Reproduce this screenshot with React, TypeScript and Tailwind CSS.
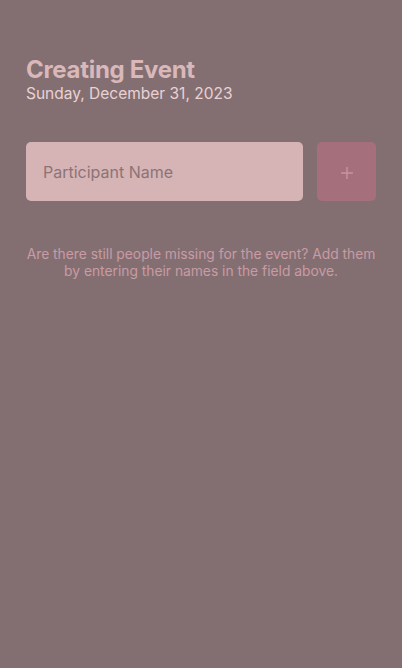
import React from "react";

export default function App() {
  return (
    <div
      className="w-[402px] h-[668px] bg-[#836f72] overflow-hidden"
      style={{ fontFamily: "Inter, 'Noto Sans', sans-serif" }}
    >
      <div className="px-[26px] pt-[56px]">
        <h1 className="text-[24px] leading-[28px] font-bold text-[#dab8ba] tracking-[-0.3px]">
          Creating Event
        </h1>
        <p className="text-[15.5px] leading-[20px] text-[#ead2d3]">
          Sunday, December 31, 2023
        </p>
        <div className="flex gap-[14px] mt-[38px]">
          <div className="flex-1 h-[59px] rounded-[5px] bg-[#d6b4b5] flex items-center px-[17px]">
            <span className="text-[16px] text-[#8c7376]">Participant Name</span>
          </div>
          <div className="w-[59px] h-[59px] rounded-[5px] bg-[#a5707b] flex items-center justify-center">
            <svg width="12" height="12" viewBox="0 0 12 12" className="mt-[2px]">
              <path d="M6 0.5V11.5M0.5 6H11.5" stroke="#c993a2" strokeWidth="1.4" strokeLinecap="round" />
            </svg>
          </div>
        </div>
        <p className="mt-[45px] text-center text-[13.8px] leading-[16.5px] text-[#c99ba4]">
          Are there still people missing for the event? Add them by entering their names in the field above.
        </p>
      </div>
    </div>
  );
}
